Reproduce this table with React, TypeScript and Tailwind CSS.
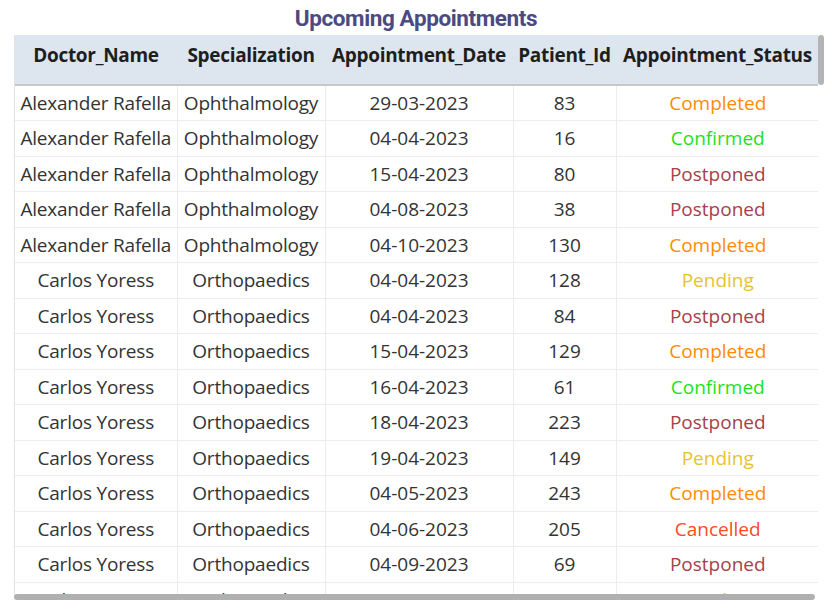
const rows: [string, string, string, number, string][] = [
  ['Alexander Rafella', 'Ophthalmology', '29-03-2023', 83, 'Completed'],
  ['Alexander Rafella', 'Ophthalmology', '04-04-2023', 16, 'Confirmed'],
  ['Alexander Rafella', 'Ophthalmology', '15-04-2023', 80, 'Postponed'],
  ['Alexander Rafella', 'Ophthalmology', '04-08-2023', 38, 'Postponed'],
  ['Alexander Rafella', 'Ophthalmology', '04-10-2023', 130, 'Completed'],
  ['Carlos Yoress', 'Orthopaedics', '04-04-2023', 128, 'Pending'],
  ['Carlos Yoress', 'Orthopaedics', '04-04-2023', 84, 'Postponed'],
  ['Carlos Yoress', 'Orthopaedics', '15-04-2023', 129, 'Completed'],
  ['Carlos Yoress', 'Orthopaedics', '16-04-2023', 61, 'Confirmed'],
  ['Carlos Yoress', 'Orthopaedics', '18-04-2023', 223, 'Postponed'],
  ['Carlos Yoress', 'Orthopaedics', '19-04-2023', 149, 'Pending'],
  ['Carlos Yoress', 'Orthopaedics', '04-05-2023', 243, 'Completed'],
  ['Carlos Yoress', 'Orthopaedics', '04-06-2023', 205, 'Cancelled'],
  ['Carlos Yoress', 'Orthopaedics', '04-09-2023', 69, 'Postponed'],
  ['Catherine Bart', 'Orthopaedics', '04-08-2023', 90, 'Pending'],
];

const statusColor: Record<string, string> = {
  Completed: 'text-[#ff8c00]',
  Confirmed: 'text-[#1ee01e]',
  Postponed: 'text-[#a8404a]',
  Pending: 'text-[#e6c233]',
  Cancelled: 'text-[#ff4a22]',
};

const headers = ['Doctor_Name', 'Specialization', 'Appointment_Date', 'Patient_Id', 'Appointment_Status'];
const widths = ['w-[162px]', 'w-[148px]', 'w-[188px]', 'w-[103px]', 'w-[203px]'];

export default function App() {
  return (
    <div className="w-[832px] h-[609px] bg-white relative overflow-hidden font-['Open_Sans',sans-serif]">
      <h1 className="h-[35px] pt-[3px] text-center text-[22.5px] leading-[30px] font-bold tracking-[-0.4px] text-[#4b4a82] font-['Roboto',sans-serif]">
        Upcoming Appointments
      </h1>
      <div className="ml-[14px] w-[804px] h-[561px] overflow-hidden relative border-l border-[#e4e4e4]">
        <table className="table-fixed border-collapse w-[804px]">
          <colgroup>
            {widths.map((w, i) => (
              <col key={i} className={w} />
            ))}
          </colgroup>
          <thead>
            <tr className="h-[50px] bg-[#dde5ee] border-b-2 border-[#c8c8c8]">
              {headers.map((h) => (
                <th key={h} className="text-[19px] font-bold text-[#1e1e1e] text-center whitespace-nowrap px-0 pb-[9px] tracking-[-0.3px]">
                  {h}
                </th>
              ))}
            </tr>
          </thead>
          <tbody>
            {rows.map((r, i) => (
              <tr key={i} className="h-[35.5px] border-b border-[#ececec]">
                <td className="text-center text-[19px] text-[#333] whitespace-nowrap border-r border-[#ececec] tracking-[-0.2px]">{r[0]}</td>
                <td className="text-center text-[19px] text-[#333] whitespace-nowrap border-r border-[#ececec] tracking-[-0.2px]">{r[1]}</td>
                <td className="text-center text-[19px] text-[#333] whitespace-nowrap border-r border-[#ececec]">{r[2]}</td>
                <td className="text-center text-[19px] text-[#333] whitespace-nowrap border-r border-[#ececec]">{r[3]}</td>
                <td className={`text-center text-[19px] whitespace-nowrap ${statusColor[r[4]]}`}>{r[4]}</td>
              </tr>
            ))}
          </tbody>
        </table>
      </div>
      <div className="absolute left-[818px] top-[35px] w-[6px] h-[50px] rounded-full bg-[#b4b4b4]" />
      <div className="absolute left-[14px] top-[594px] w-[801px] h-[6px] rounded-full bg-[#b0b0b0]" />
    </div>
  );
}
